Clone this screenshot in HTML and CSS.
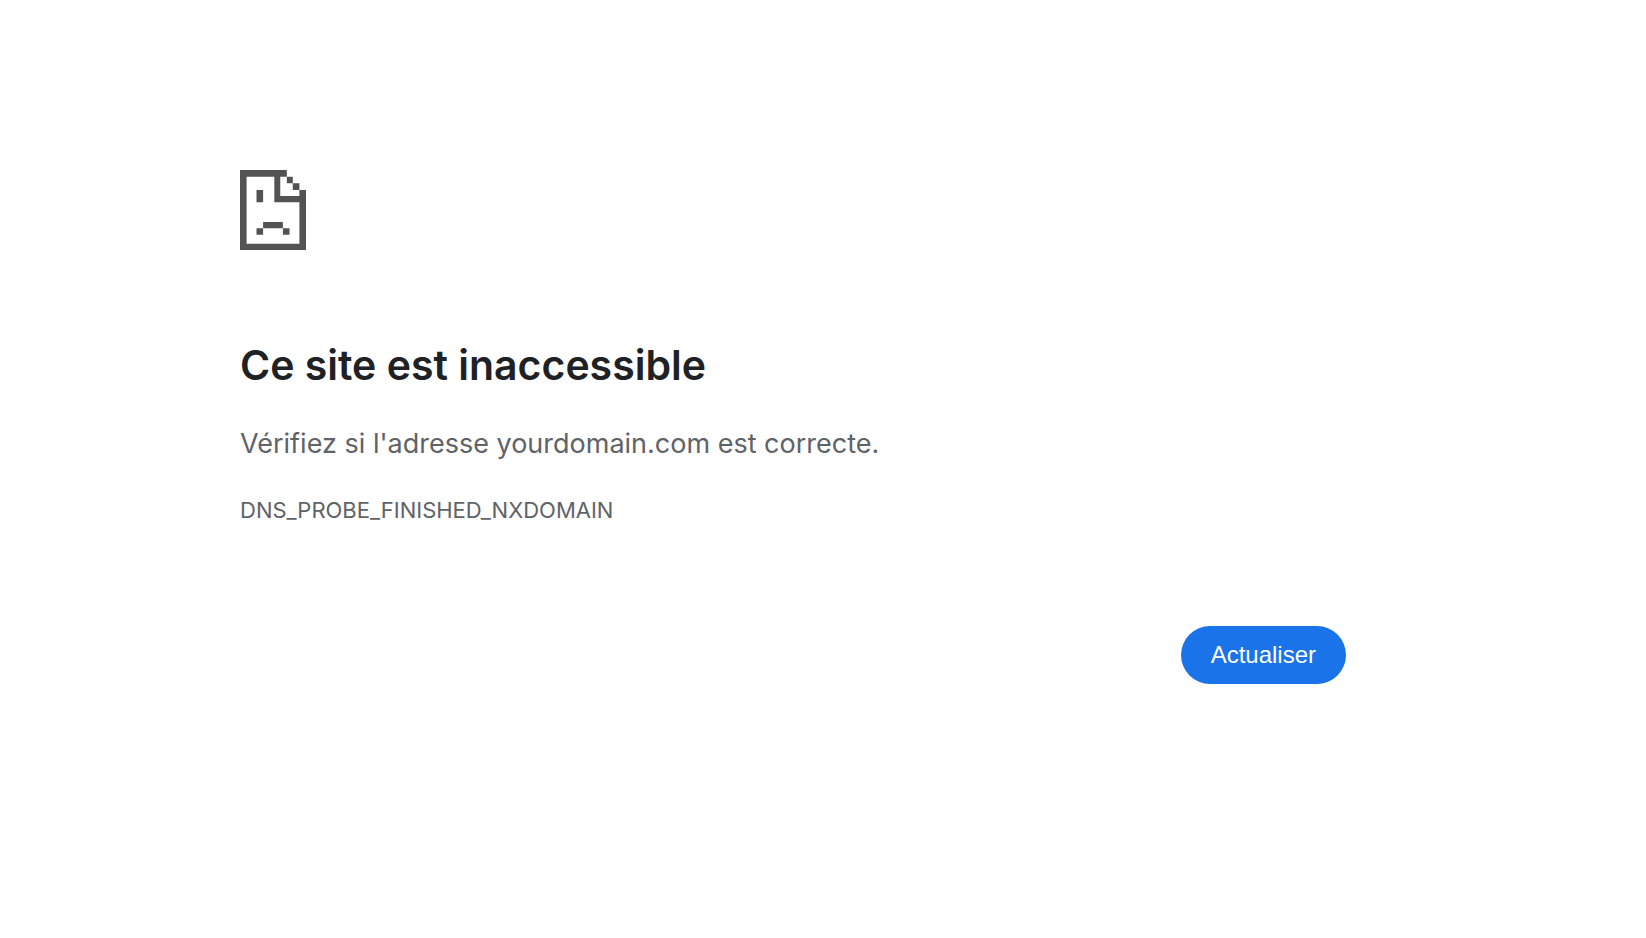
FILE: index.html
```
<!DOCTYPE html>
<html lang="fr">
<head>
    <meta charset="UTF-8">
    <meta name="viewport" content="width=device-width, initial-scale=1.0">
    <title>yourdomain.com</title>
    <link rel="stylesheet" href="styles.css">
</head>
<body>
    <main class="error-page">
        <svg class="icon" viewBox="0 0 200 240" preserveAspectRatio="none" aria-hidden="true">
            <!-- page -->
            <path d="M0 0H142V20H122V78H180V60H200V240H0ZM20 20V221H180V97H104V20Z" fill-rule="evenodd"/>
            <!-- folded corner -->
            <path d="M142 20H160V40H142ZM160 40H180V60H160Z"/>
            <!-- face -->
            <path d="M50 60H70V97H50ZM70 156H130V175H70ZM50 175H70V194H50ZM130 175H150V194H130Z"/>
        </svg>
        <h1>Ce site est inaccessible</h1>
        <p class="summary">Vérifiez si l'adresse yourdomain.com est correcte.</p>
        <p class="error-code">DNS_PROBE_FINISHED_NXDOMAIN</p>
        <div class="buttons">
            <button type="button" class="reload">Actualiser</button>
        </div>
    </main>
    <script>
        document.querySelector(".reload").onclick = function () {
            location.reload();
        };
    </script>
</body>
</html>
```
FILE: styles.css
```
body{
    margin: 0;
    background: #fff;
    color: #5f6368;
    font-family: Inter, "Liberation Sans", sans-serif;
}
.error-page{
    padding: 170px 300px 40px 240px;
}
.icon{
    display: block;
    width: 66px;
    height: 80px;
    fill: #535353;
}
h1{
    margin: 87px 0 0;
    color: #202124;
    font-size: 41px;
    font-weight: 600;
    line-height: 56px;
}
p{
    margin: 0;
}
.summary{
    margin-top: 31px;
    font-size: 27px;
    line-height: 40px;
}
.error-code{
    margin-top: 30px;
    font-size: 22px;
    line-height: 32px;
}
.buttons{
    display: flex;
    justify-content: flex-end;
    margin-top: 100px;
}
.reload{
    padding: 0 30px;
    border: 0;
    border-radius: 29px;
    background: #1a73e8;
    color: #fff;
    font-family: "Liberation Sans", Arial, sans-serif;
    font-size: 24px;
    line-height: 58px;
    cursor: pointer;
}
.reload:hover{
    background: #1765cc;
}
```
